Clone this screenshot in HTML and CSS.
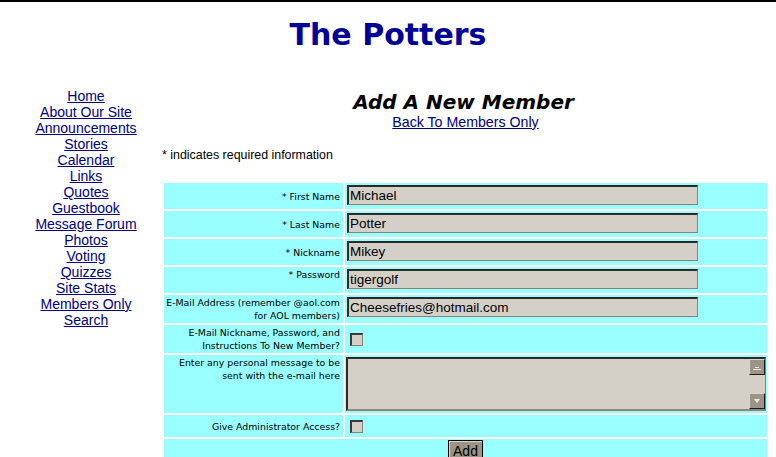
FILE: index.html
```html
<!DOCTYPE html>
<html>
<head>
<meta charset="utf-8">
<title>The Potters - Add A New Member</title>
<link rel="stylesheet" href="styles.css">
</head>
<body>
<header class="site-header">
  <h1 class="site-title">The Potters</h1>
</header>
<div class="main">
  <nav class="side-nav">
    <a href="#">Home</a>
    <a href="#">About Our Site</a>
    <a href="#">Announcements</a>
    <a href="#">Stories</a>
    <a href="#">Calendar</a>
    <a href="#">Links</a>
    <a href="#">Quotes</a>
    <a href="#">Guestbook</a>
    <a href="#">Message Forum</a>
    <a href="#">Photos</a>
    <a href="#">Voting</a>
    <a href="#">Quizzes</a>
    <a href="#">Site Stats</a>
    <a href="#">Members Only</a>
    <a href="#">Search</a>
  </nav>
  <section class="content">
    <h2 class="page-title">Add A New Member</h2>
    <a class="back-link" href="#">Back To Members Only</a>
    <p class="note">* indicates required information</p>
    <form class="member-form">
      <div class="lbl mid">* First Name</div>
      <div class="fld"><input class="txt" type="text" value="Michael"></div>

      <div class="lbl mid">* Last Name</div>
      <div class="fld"><input class="txt" type="text" value="Potter"></div>

      <div class="lbl mid">* Nickname</div>
      <div class="fld"><input class="txt" type="text" value="Mikey"></div>

      <div class="lbl top">* Password</div>
      <div class="fld"><input class="txt" type="text" value="tigergolf"></div>

      <div class="lbl mid">E-Mail Address (remember @aol.com<br>for AOL members)</div>
      <div class="fld"><input class="txt" type="text" value="Cheesefries@hotmail.com"></div>

      <div class="lbl mid">E-Mail Nickname, Password, and<br>Instructions To New Member?</div>
      <div class="fld chk-cell"><input class="chk" type="checkbox"></div>

      <div class="lbl top">Enter any personal message to be<br>sent with the e-mail here</div>
      <div class="fld area-cell">
        <div class="msg-box">
          <textarea class="msg"></textarea>
          <div class="scrollbar">
            <span class="sb-btn"><svg width="8" height="5" viewBox="0 0 8 5"><path d="M0 4.5h8M2 2.5h4" stroke="#f0ece4" stroke-width="1"/></svg></span>
            <span class="sb-track"></span>
            <span class="sb-btn"><svg width="8" height="6" viewBox="0 0 8 6"><path d="M1 1h6L4 5z" fill="#f0ece4"/></svg></span>
          </div>
        </div>
      </div>

      <div class="lbl mid">Give Administrator Access?</div>
      <div class="fld chk-cell"><input class="chk" type="checkbox"></div>

      <div class="submit-row"><button class="add-btn" type="button">Add</button></div>
    </form>
  </section>
</div>
</body>
</html>
```
FILE: styles.css
```css
html, body {
  margin: 0;
  padding: 0;
  background: #ffffff;
}
body {
  border-top: 2px solid #000000;
  font-family: "Liberation Sans", Arial, sans-serif;
  color: #000000;
  overflow: hidden;
}
.site-header {
  padding-top: 15px;
  text-align: center;
}
.site-title {
  margin: 0;
  font-family: "DejaVu Sans", Verdana, sans-serif;
  font-weight: bold;
  font-size: 30px;
  line-height: 36px;
  color: #000099;
}
.main {
  display: flex;
  margin-top: 35px;
}
.side-nav {
  width: 148px;
  padding: 0 0 0 12px;
  display: flex;
  flex-direction: column;
  align-items: center;
  font-size: 14px;
  line-height: 16px;
}
.side-nav a, .back-link {
  color: #000080;
  text-decoration: underline;
}
.content {
  flex: 1;
  padding: 2px 7px 0 2px;
  display: flex;
  flex-direction: column;
  align-items: stretch;
}
.page-title {
  margin: 0;
  padding-right: 4px;
  text-align: center;
  font-family: "DejaVu Sans", Verdana, sans-serif;
  font-weight: bold;
  font-style: italic;
  font-size: 20px;
  line-height: 24px;
}
.back-link {
  align-self: center;
  font-size: 14.2px;
  line-height: 16px;
}
.note {
  margin: 17px 0 0 0;
  font-size: 12.4px;
  line-height: 16px;
}
.member-form {
  margin-top: 18px;
  display: grid;
  grid-template-columns: 179px 422px;
  grid-template-rows: 26px 26px 26px 26px 28px 28px 58px 22px 30px;
  gap: 2px;
  padding: 2px;
  background: #ffffff;
}
.lbl {
  background: #99ffff;
  font-family: "DejaVu Sans", Verdana, sans-serif;
  font-size: 9.4px;
  line-height: 13px;
  text-align: right;
  padding-right: 3px;
  display: flex;
  justify-content: flex-end;
}
.lbl.mid { align-items: center; }
.lbl.top { align-items: flex-start; padding-top: 1px; }
.fld {
  background: #99ffff;
  padding: 2px 0 0 2px;
}
.txt {
  display: block;
  box-sizing: border-box;
  width: 351px;
  height: 20px;
  margin: 0;
  padding: 0 0 0 1px;
  background: #d4d0c8;
  border-style: solid;
  border-width: 2px 1px 1px 2px;
  border-color: #2a2a2a #8c8478 #8c8478 #2a2a2a;
  font-family: "Liberation Sans", Arial, sans-serif;
  font-size: 13.5px;
  color: #000000;
  outline: none;
}
.chk-cell {
  display: flex;
  align-items: center;
  padding: 1px 0 0 5px;
}
.chk {
  -webkit-appearance: none;
  appearance: none;
  display: block;
  margin: 0;
  width: 13px;
  height: 13px;
  box-sizing: border-box;
  background: #d4d0c8;
  border-style: solid;
  border-width: 2px 1px 1px 2px;
  border-color: #3a3a3a #8c8478 #8c8478 #3a3a3a;
}
.area-cell {
  padding: 2px 0 0 1px;
}
.msg-box {
  display: flex;
  box-sizing: border-box;
  width: 420px;
  height: 54px;
  background: #d4d0c8;
  border-style: solid;
  border-width: 2px 1px 2px 2px;
  border-color: #2a2a2a #8c8478 #8c8478 #2a2a2a;
}
.msg {
  flex: 1;
  margin: 0;
  border: none;
  background: transparent;
  resize: none;
  outline: none;
  font-family: "Liberation Mono", monospace;
  font-size: 13px;
}
.scrollbar {
  width: 16px;
  display: flex;
  flex-direction: column;
}
.sb-btn {
  height: 16px;
  box-sizing: border-box;
  background: #9c9486;
  border-style: solid;
  border-width: 1px;
  border-color: #d8d4cc #1a1a1a #1a1a1a #d8d4cc;
  display: flex;
  align-items: center;
  justify-content: center;
}
.sb-track {
  flex: 1;
  background: #d4d0c8;
}
.submit-row {
  grid-column: 1 / 3;
  background: #99ffff;
  display: flex;
  justify-content: center;
  align-items: flex-start;
  padding-top: 1px;
}
.add-btn {
  margin: 0;
  padding: 0 4px;
  height: 22px;
  background: #9c9486;
  border: 1px solid #000000;
  box-shadow: inset 1px 1px 0 #d8d4cc;
  font-family: "Liberation Sans", Arial, sans-serif;
  font-size: 14px;
  line-height: 16px;
  color: #000000;
}
```
